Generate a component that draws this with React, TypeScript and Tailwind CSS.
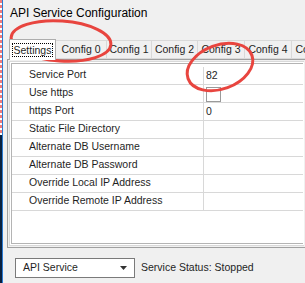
const rows: { name: string; value?: string; check?: boolean }[] = [
  { name: 'Service Port', value: '82' },
  { name: 'Use https', check: true },
  { name: 'https Port', value: '0' },
  { name: 'Static File Directory' },
  { name: 'Alternate DB Username' },
  { name: 'Alternate DB Password' },
  { name: 'Override Local IP Address' },
  { name: 'Override Remote IP Address' },
];

const tabs = [
  { label: 'Config 0', w: 'w-[51px]' },
  { label: 'Config 1', w: 'w-[45px]' },
  { label: 'Config 2', w: 'w-[46px]' },
  { label: 'Config 3', w: 'w-[47px]' },
  { label: 'Config 4', w: 'w-[47px]' },
  { label: 'Config 5', w: 'w-[47px]' },
];

export default function App() {
  return (
    <div className="relative flex w-[305px] h-[283px] overflow-hidden bg-[#f0f0f0] font-['Liberation_Sans',Arial,sans-serif] text-[10.5px] text-[#1f1f1f]">
      {/* edge of the window behind */}
      <div className="flex flex-col w-[2px] shrink-0">
        <div className="h-[135px] bg-[repeating-linear-gradient(to_bottom,#f07a7a_0px,#f07a7a_3px,#ffffff_3px,#ffffff_5px)]" />
        <div className="flex-1 bg-[#08203f]" />
      </div>
      <div className="w-px shrink-0 bg-[#2b7bd3]" />

      <div className="flex flex-col flex-1 min-w-0">
        <div className="h-[26px] flex items-center pl-[7px] text-[12px] text-black">API Service Configuration</div>

        {/* tab strip */}
        <div className="mt-[12px] ml-[6px] flex items-end h-[21px] whitespace-nowrap">
          <div className="relative z-10 h-[21px] w-[47px] shrink-0 bg-white border border-b-0 border-[#adadad] flex items-center justify-center -mb-px">
            <span className="border border-dotted border-black px-px leading-[12px]">Settings</span>
          </div>
          {tabs.map((t) => (
            <div
              key={t.label}
              className={`${t.w} h-[19px] shrink-0 bg-[#f0f0f0] border border-l-0 border-[#d9d9d9] flex items-center justify-center`}
            >
              {t.label}
            </div>
          ))}
        </div>

        {/* tab panel */}
        <div className="ml-[4px] h-[189px] border-l border-t border-b border-[#a0a0a0] p-px">
          <div className="h-full border-l border-t border-b border-[#d9d9d9] p-px bg-white">
            <div className="h-full border-l border-t border-b border-[#b4b4b4] bg-white pt-[3px]">
              {rows.map((r) => (
                <div key={r.name} className="flex h-[18px] border-b border-[#d8d8d8]">
                  <div className="w-[192px] shrink-0 pl-[17px] pb-[2px] border-r border-[#d8d8d8] flex items-center">{r.name}</div>
                  <div className="flex-1 pl-[2px] flex items-start">
                    {r.check ? (
                      <div className="w-[15px] h-[15px] mt-[2px] border border-[#9a9a9a] bg-white" />
                    ) : (
                      <span className="mt-px">{r.value}</span>
                    )}
                  </div>
                </div>
              ))}
            </div>
          </div>
        </div>

        {/* bottom bar */}
        <div className="flex items-center mt-[10px] ml-[12px]">
          <div className="w-[120px] h-[20px] bg-white border border-[#7a7a7a] flex items-center justify-between pl-[7px] pr-[7px]">
            <span>API Service</span>
            <svg width="7" height="4" viewBox="0 0 7 4">
              <path d="M0 0H7L3.5 4Z" fill="#333" />
            </svg>
          </div>
          <span className="ml-[6px]">Service Status: Stopped</span>
        </div>
      </div>

      {/* red annotation circles */}
      <svg className="absolute inset-0 pointer-events-none" width="305" height="283">
        <ellipse cx="61" cy="41" rx="50" ry="20" transform="rotate(4 61 41)" fill="none" stroke="#e8453f" strokeWidth="3" />
        <ellipse cx="220" cy="67" rx="34" ry="22" transform="rotate(-20 220 67)" fill="none" stroke="#e8453f" strokeWidth="3" />
      </svg>
    </div>
  );
}
